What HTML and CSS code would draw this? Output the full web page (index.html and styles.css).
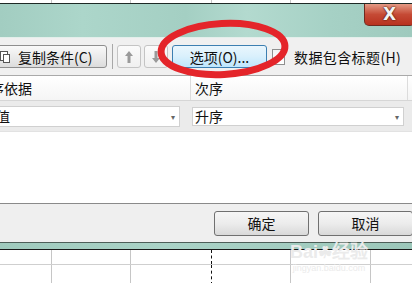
FILE: index.html
```html
<!DOCTYPE html>
<html lang="zh-CN">
<head>
    <meta charset="UTF-8">
    <title>排序</title>
    <link rel="stylesheet" href="styles.css">
</head>
<body>
<div class="page">

    <!-- sheet behind the dialog -->
    <div class="sheet sheet-top">
        <div class="cell c1"></div><div class="cell c2"></div><div class="cell c3"></div>
        <div class="cell c4"></div><div class="cell c5"></div><div class="cell c6"></div>
    </div>

    <!-- Sort dialog -->
    <div class="dialog">
        <div class="titlebar">
            <div class="close-btn">X</div>
        </div>

        <div class="toolbar">
            <button class="tb-btn copy-btn">
                <svg class="copy-icon" width="12" height="14" viewBox="0 0 12 14">
                    <rect x="1.5" y="1.5" width="7" height="9" fill="#fff" stroke="#555"/>
                    <rect x="4.5" y="4.5" width="6" height="8" fill="#fff" stroke="#555"/>
                </svg>
                复制条件(C)
            </button>
            <span class="sep"></span>
            <button class="tb-btn arrow-btn">
                <svg width="10" height="14" viewBox="0 0 10 14"><path d="M5 1 L9 6 H6.5 V13 H3.5 V6 H1 Z" fill="#9a9a9a"/></svg>
            </button>
            <button class="tb-btn arrow-btn">
                <svg width="10" height="14" viewBox="0 0 10 14"><path d="M5 13 L9 8 H6.5 V1 H3.5 V8 H1 Z" fill="#9a9a9a"/></svg>
            </button>
            <button class="tb-btn options-btn">选项(O)...</button>
            <span class="checkbox"></span>
            <span class="check-label">数据包含标题(H)</span>
        </div>

        <div class="grid-head">
            <div class="col-a head-cell"><span class="clip-left">排序依据</span></div>
            <div class="col-b head-cell">次序</div>
        </div>

        <div class="grid-row">
            <div class="col-a">
                <div class="combo combo-a"><span class="clip-value">数值</span><span class="drop">&#9662;</span></div>
            </div>
            <div class="col-b">
                <div class="combo combo-b"><span>升序</span><span class="drop">&#9662;</span></div>
            </div>
        </div>

        <div class="grid-empty"></div>

        <div class="footer">
            <button class="dlg-btn">确定</button>
            <button class="dlg-btn">取消</button>
        </div>
    </div>

    <div class="frame-strip"></div>

    <div class="sheet sheet-bottom">
        <div class="sheet-line">
            <div class="cell c1"></div><div class="cell c2"></div><div class="cell c3 dashed"></div>
            <div class="cell c4"></div><div class="cell c5"></div><div class="cell c6"></div>
        </div>
        <div class="sheet-line">
            <div class="cell c1"></div><div class="cell c2"></div><div class="cell c3 dashed"></div>
            <div class="cell c4"></div><div class="cell c5"></div><div class="cell c6"></div>
        </div>
    </div>

    <!-- watermark -->
    <div class="watermark">
        <span class="wm-logo">Bai<b>&#x2618;</b>经验</span>
        <span class="wm-url">jingyan.baidu.com</span>
    </div>

    <!-- red marker circle -->
    <svg class="marker" width="412" height="283" viewBox="0 0 412 283">
        <ellipse cx="223" cy="49" rx="62" ry="25.5" fill="none" stroke="#e4252a" stroke-width="7" transform="rotate(-3 223 49)"/>
    </svg>
</div>
</body>
</html>
```

FILE: styles.css
```css
/* General */
body {
    margin: 0;
    font-family: "Noto Sans CJK SC", "DejaVu Sans", sans-serif;
    font-size: 14px;
    color: #111;
    background: #fff;
}

.page {
    position: relative;
    width: 412px;
    height: 283px;
    overflow: hidden;
}

button {
    font-family: inherit;
    font-size: 14px;
    color: #111;
    cursor: pointer;
}

/* Sheet behind */
.sheet {
    display: flex;
    flex-direction: column;
}

.sheet-top {
    flex-direction: row;
    height: 3px;
    border-bottom: 1px solid #1e2a26;
}

.sheet-line {
    display: flex;
    height: 14px;
    border-bottom: 1px solid #cfcfcf;
}

.sheet-line:last-child {
    height: 20px;
    border-bottom: none;
}

.cell {
    border-right: 1px solid #c6c6c6;
    flex-shrink: 0;
}

.c1 { width: 51px; }
.c2 { width: 78px; }
.c3 { width: 80px; border-right-color: transparent; }
.c4 { width: 78px; }
.c5 { width: 79px; }
.c6 { width: 41px; border-right: none; }

.c3.dashed {
    border-right: 1px dashed #111;
}

.sheet-top .c3 { border-right: 1px solid #c6c6c6; }

/* Dialog */
.dialog {
    display: flex;
    flex-direction: column;
}

.titlebar {
    display: flex;
    justify-content: flex-end;
    height: 33px;
    background: linear-gradient(90deg, #a2cdc1 0%, #acd6ca 20%, #a4cfc3 45%, #b3dacf 60%, #a6d1c5 80%, #9fcabe 100%);
    border-bottom: 1px solid #e3efeb;
}

.close-btn {
    width: 49px;
    height: 21px;
    margin-right: -3px;
    background: linear-gradient(#e49a85, #c54a35 50%, #b8321f);
    border: 1px solid #6f2a1f;
    border-top: none;
    border-radius: 0 0 5px 5px;
    color: #f4f4f4;
    font-family: "DejaVu Sans", sans-serif;
    font-size: 17px;
    font-weight: bold;
    line-height: 21px;
    text-align: center;
    text-shadow: 0 0 2px #4a140c, 0 0 1px #4a140c;
}

/* Toolbar */
.toolbar {
    display: flex;
    align-items: center;
    height: 37px;
    background: #f0f0f0;
    border-bottom: 1px solid #a9a9a9;
}

.tb-btn {
    display: flex;
    align-items: center;
    justify-content: center;
    height: 23px;
    padding: 0;
    background: linear-gradient(#f9f9f9, #ebebeb 50%, #dcdcdc);
    border: 1px solid #8e8e8e;
    border-radius: 3px;
}

.copy-btn {
    width: 122px;
    margin-left: -15px;
    justify-content: flex-start;
    padding-left: 13px;
    gap: 7px;
}

.copy-icon {
    flex-shrink: 0;
}

.sep {
    width: 1px;
    height: 25px;
    margin: 0 4px 0 5px;
    background: #a8a8a8;
}

.arrow-btn {
    width: 24px;
    margin-right: 3px;
    background: linear-gradient(#fbfbfb, #f0f0f0);
    border-color: #c4c4c4;
}

.options-btn {
    width: 95px;
    margin-left: 1px;
    background: linear-gradient(#eaf6fd, #d9f0fc 50%, #bee6fd);
    border-color: #3c7fb1;
}

.checkbox {
    width: 11px;
    height: 14px;
    margin-left: 5px;
    background: linear-gradient(#f4f4f4, #fff);
    border: 1px solid #8f8f8f;
}

.check-label {
    margin-left: 9px;
    white-space: nowrap;
    letter-spacing: 0.4px;
}

/* Condition grid */
.grid-head,
.grid-row {
    display: flex;
}

.grid-head {
    height: 24px;
    background: linear-gradient(#fff, #f5f5f5);
    border-bottom: 1px solid #d6d6d6;
}

.head-cell {
    display: flex;
    align-items: center;
    white-space: nowrap;
}

.col-a {
    width: 190px;
    flex-shrink: 0;
    border-right: 1px solid #dcdcdc;
    overflow: hidden;
}

.col-b {
    flex: 1;
    padding-left: 2px;
}

.grid-head .col-b {
    padding-left: 4px;
    border-right: 1px solid #dcdcdc;
    margin-right: 4px;
}

.clip-left {
    margin-left: -24px;
}

.grid-row {
    height: 30px;
    align-items: center;
    background: #ebebeb;
    border-bottom: 1px solid #e2e2e2;
}

.grid-row .col-a {
    border-right: none;
    height: 100%;
    display: flex;
    align-items: center;
}

.grid-row .col-b {
    padding-left: 2px;
}

.combo {
    display: flex;
    align-items: center;
    justify-content: space-between;
    height: 19px;
    background: #fff;
    border: 1px solid #d0d0d0;
    white-space: nowrap;
}

.combo-a {
    width: 179px;
    margin-left: -1px;
}

.clip-value {
    margin-left: -18px;
}

.combo-b {
    width: 212px;
    padding-left: 2px;
    box-sizing: border-box;
    margin-left: 0;
}

.drop {
    color: #666;
    font-size: 8px;
    margin-right: 4px;
}

.grid-empty {
    height: 71px;
    background: #fff;
}

/* Footer */
.footer {
    display: flex;
    justify-content: flex-end;
    align-items: center;
    gap: 9px;
    height: 38px;
    padding-right: 0;
    margin-right: -1px;
    background: #efefef;
    border-top: 1px solid #8a8a8a;
    border-bottom: 1px solid #4d5e58;
}

.dlg-btn {
    width: 95px;
    height: 25px;
    background: linear-gradient(#f6f6f6, #ececec 50%, #d9d9d9);
    border: 1px solid #707070;
    border-radius: 3px;
}

.frame-strip {
    height: 6px;
    background: linear-gradient(90deg, #9fcabd, #aad3c7 40%, #9cc7ba 100%);
    border-bottom: 1px solid #1a1a1a;
}

/* Watermark */
.watermark {
    position: absolute;
    left: 290px;
    top: 243px;
    display: flex;
    flex-direction: column;
    align-items: center;
    color: #ebebeb;
    line-height: 1;
}

.wm-logo {
    font-family: "Liberation Sans", sans-serif;
    font-size: 18px;
    font-weight: bold;
}

.wm-logo b {
    font-size: 16px;
}

.wm-url {
    font-family: "Liberation Sans", sans-serif;
    font-size: 9px;
    margin-top: 3px;
}

/* Marker */
.marker {
    position: absolute;
    left: 0;
    top: 0;
    pointer-events: none;
}
```
